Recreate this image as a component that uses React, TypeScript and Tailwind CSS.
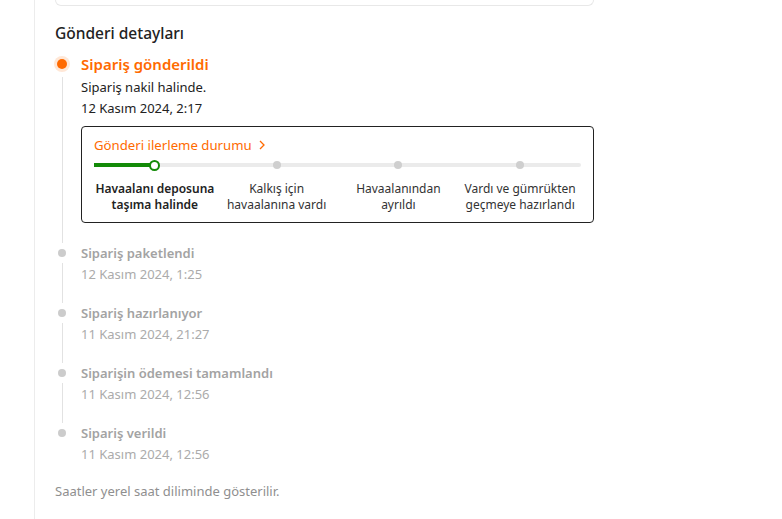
import React from 'react';

interface Step {
  title: string;
  date: string;
}

const pastSteps: Step[] = [
  { title: 'Sipariş paketlendi', date: '12 Kasım 2024, 1:25' },
  { title: 'Sipariş hazırlanıyor', date: '11 Kasım 2024, 21:27' },
  { title: 'Siparişin ödemesi tamamlandı', date: '11 Kasım 2024, 12:56' },
  { title: 'Sipariş verildi', date: '11 Kasım 2024, 12:56' },
];

const stages = [
  { label: ['Havaalanı deposuna', 'taşıma halinde'], active: true },
  { label: ['Kalkış için', 'havaalanına vardı'], active: false },
  { label: ['Havaalanından', 'ayrıldı'], active: false },
  { label: ['Vardı ve gümrükten', 'geçmeye hazırlandı'], active: false },
];

function ProgressBox() {
  return (
    <div className="mt-[8px] border border-[#222] rounded-[4px] px-[12px] pt-[9px] pb-[9px]">
      <div className="flex items-center gap-[7px] text-[13.2px] leading-[18px] text-[#ff6a00]">
        <span>Gönderi ilerleme durumu</span>
        <svg width="6" height="10" viewBox="0 0 6 10" fill="none">
          <path d="M1 1l4 4-4 4" stroke="#ff6a00" strokeWidth="1.3" />
        </svg>
      </div>

      {/* track */}
      <div className="relative mt-[5px] h-[12px]">
        <div className="absolute left-0 right-0 top-[4px] h-[4px] bg-[#ebebeb] rounded-full" />
        <div className="absolute left-0 top-[4px] h-[4px] w-[61px] bg-[#138a07]" />
        <div className="relative grid grid-cols-4 h-full">
          {stages.map((s, i) => (
            <div key={i} className="flex items-center justify-center">
              {s.active ? (
                <div className="w-[11px] h-[11px] rounded-full border-2 border-[#138a07] bg-white" />
              ) : (
                <div className="w-[8px] h-[8px] rounded-full bg-[#cfcfcf]" />
              )}
            </div>
          ))}
        </div>
      </div>

      <div className="grid grid-cols-4 mt-[10px]">
        {stages.map((s, i) => (
          <div
            key={i}
            className={`text-center whitespace-nowrap text-[12px] leading-[16px] ${s.active ? 'font-semibold text-[#222]' : 'text-[#333]'}`}
          >
            <div>{s.label[0]}</div>
            <div>{s.label[1]}</div>
          </div>
        ))}
      </div>
    </div>
  );
}

export default function App() {
  return (
    <div
      className="min-h-screen bg-white"
      style={{ fontFamily: '"Segoe UI", "Noto Sans", sans-serif' }}
    >
      <div className="ml-[34px] min-h-[519px] border-l border-[#ececec] pl-[20px]">
        <div className="w-[539px]">
          <div className="h-[6px] border border-t-0 border-[#e8e8e8] rounded-b-[6px]" />

          <h2 className="mt-[15px] text-[15.5px] leading-[24px] font-medium text-[#222]">
            Gönderi detayları
          </h2>

          <div className="mt-[9px]">
            {/* current step */}
            <div className="flex">
              <div className="w-[14px] flex flex-col items-center">
                <div className="h-[20px] flex items-center">
                  <div className="w-[10px] h-[10px] rounded-full bg-[#ff6a00] ring-[3px] ring-[#ffe7d6]" />
                </div>
                <div className="flex-1 w-px bg-[#e2e2e2] mt-[3px]" />
              </div>
              <div className="ml-[12px] flex-1 pb-[20px]">
                <div className="text-[15px] leading-[20px] font-semibold text-[#ff6a00]">
                  Sipariş gönderildi
                </div>
                <div className="mt-[3px] text-[13px] leading-[20px] text-[#222]">Sipariş nakil halinde.</div>
                <div className="mt-[1px] text-[13px] leading-[20px] text-[#222]">12 Kasım 2024, 2:17</div>
                <ProgressBox />
              </div>
            </div>

            {pastSteps.map((step, i) => {
              const last = i === pastSteps.length - 1;
              return (
                <div key={i} className="flex">
                  <div className="w-[14px] flex flex-col items-center">
                    <div className="h-[20px] flex items-center">
                      <div className="w-[8px] h-[8px] rounded-full bg-[#cccccc]" />
                    </div>
                    {!last && <div className="flex-1 w-px bg-[#e2e2e2]" />}
                  </div>
                  <div className={`ml-[12px] flex-1 ${last ? '' : 'pb-[19px]'}`}>
                    <div className="text-[13px] leading-[20px] font-semibold text-[#a3a3a3]">{step.title}</div>
                    <div className="mt-[1px] text-[13px] leading-[20px] text-[#ababab]">{step.date}</div>
                  </div>
                </div>
              );
            })}
          </div>

          <p className="mt-[18px] text-[13px] leading-[18px] text-[#8f8f8f]">
            Saatler yerel saat diliminde gösterilir.
          </p>
        </div>
      </div>
    </div>
  );
}
